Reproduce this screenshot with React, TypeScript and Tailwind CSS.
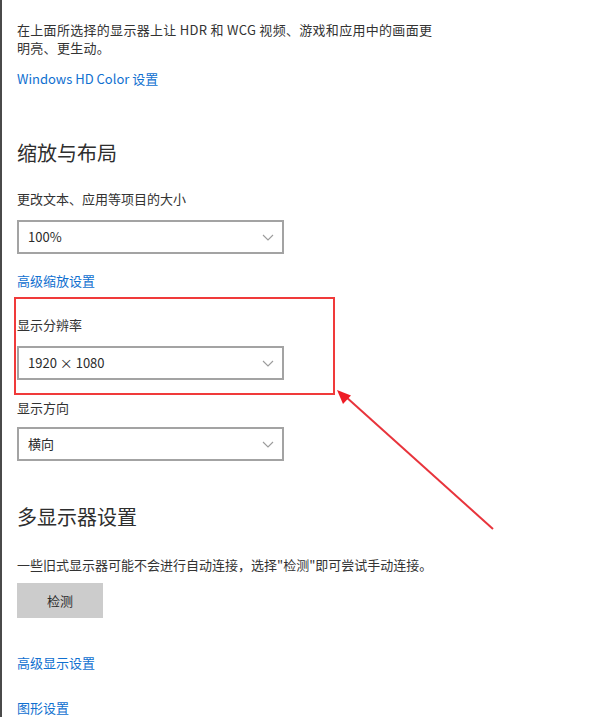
import React from "react";

const font = { fontFamily: '"Noto Sans CJK SC", "Noto Sans", sans-serif' };

function Select({ value }: { value: string }) {
  return (
    <div className="w-[267px] h-[34px] border-2 border-[#a3a3a3] bg-white flex items-center justify-between pl-[9px] pr-[8px]">
      <span className="text-[13px] text-[#2b2b2b]">{value}</span>
      <svg width="12" height="7" viewBox="0 0 12 7">
        <path d="M1 1 L6 6 L11 1" fill="none" stroke="#9c9c9c" strokeWidth="1.1" />
      </svg>
    </div>
  );
}

export default function App() {
  return (
    <div className="relative w-[616px] h-[717px] bg-white overflow-hidden" style={font}>
      <div className="absolute left-0 top-0 w-[2px] h-full bg-[#4a4a4a]" />
      <div className="flex flex-col items-start pl-[17px] pt-[21px] text-[#333333]">
        <p className="text-[13px] leading-[18px] w-[440px] tracking-[0.3px]">
          在上面所选择的显示器上让 HDR 和 WCG 视频、游戏和应用中的画面更
          <br />
          明亮、更生动。
        </p>
        <a className="mt-[13px] text-[13px] leading-[18px] text-[#1070d0]">Windows HD Color 设置</a>
        <h2 className="mt-[51px] text-[20px] leading-[28px] text-[#2e2e2e]">缩放与布局</h2>
        <p className="mt-[23px] text-[13px] leading-[18px]">更改文本、应用等项目的大小</p>
        <div className="mt-[12px]">
          <Select value="100%" />
        </div>
        <a className="mt-[18px] text-[13px] leading-[18px] text-[#1070d0]">高级缩放设置</a>
        <p className="mt-[26px] text-[13px] leading-[18px]">显示分辨率</p>
        <div className="mt-[12px]">
          <Select value="1920 × 1080" />
        </div>
        <p className="mt-[19px] text-[13px] leading-[18px]">显示方向</p>
        <div className="mt-[10px]">
          <Select value="横向" />
        </div>
        <h2 className="mt-[42px] text-[20px] leading-[28px] text-[#2e2e2e]">多显示器设置</h2>
        <p className="mt-[25px] text-[13px] leading-[18px]">
          一些旧式显示器可能不会进行自动连接，选择"检测"即可尝试手动连接。
        </p>
        <button className="mt-[9px] w-[86px] h-[35px] bg-[#cccccc] text-[13px] text-[#2b2b2b]">检测</button>
        <a className="mt-[36px] text-[13px] leading-[18px] text-[#1070d0]">高级显示设置</a>
        <a className="mt-[27px] text-[13px] leading-[18px] text-[#1070d0]">图形设置</a>
      </div>
      <div className="absolute left-[14px] top-[297px] w-[321px] h-[98px] border-2 border-[#f03a3a]" />
      <svg className="absolute left-0 top-0" width="616" height="717">
        <line x1="493" y1="529" x2="345" y2="396" stroke="#e8343c" strokeWidth="2" />
        <polygon points="337,390 351,395.5 343,404" fill="#ee1c25" />
      </svg>
    </div>
  );
}
